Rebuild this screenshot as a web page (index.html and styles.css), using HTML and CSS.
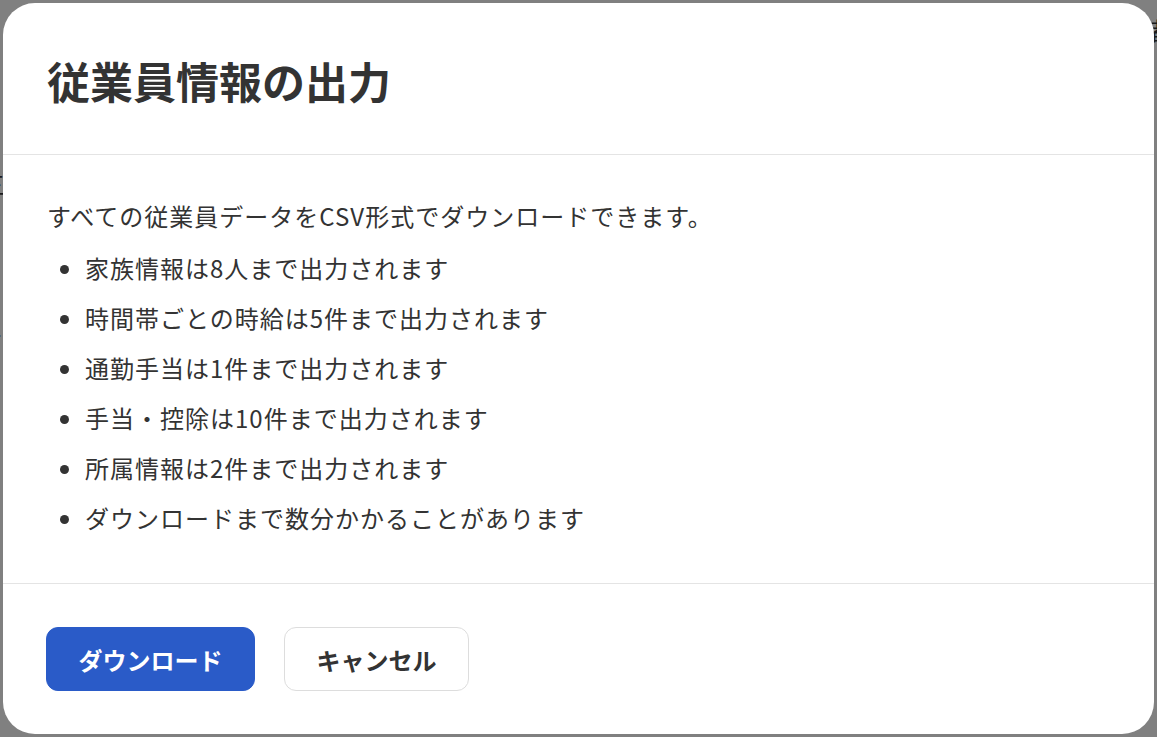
FILE: index.html
```html
<!doctype html>
<html lang="ja">
<head>
<meta charset="utf-8" />
<meta name="viewport" content="width=device-width" />
<title>従業員情報の出力</title>
<link rel="stylesheet" href="styles.css">
</head>
<body>
<!-- bits of the page that show behind the overlay -->
<div class="peek peek-right" aria-hidden="true">者</div>
<div class="peek peek-left1" aria-hidden="true">三</div>
<div class="peek peek-left2" aria-hidden="true">2</div>

<div class="modal">
	<div class="modal-header">
		<h1>従業員情報の出力</h1>
	</div>
	<div class="modal-body">
		<p>すべての従業員データをCSV形式でダウンロードできます。</p>
		<ul>
			<li>家族情報は8人まで出力されます</li>
			<li>時間帯ごとの時給は5件まで出力されます</li>
			<li>通勤手当は1件まで出力されます</li>
			<li>手当・控除は10件まで出力されます</li>
			<li>所属情報は2件まで出力されます</li>
			<li>ダウンロードまで数分かかることがあります</li>
		</ul>
	</div>
	<div class="modal-footer">
		<button class="btn btn-primary">ダウンロード</button>
		<button class="btn btn-secondary">キャンセル</button>
	</div>
</div>
</body>
</html>
```

FILE: styles.css
```css
* {
	box-sizing: border-box;
}
html, body {
	margin: 0;
	height: 100%;
}
body {
	background-color: #808080;
	font-family: "Noto Sans CJK JP", "Noto Sans", sans-serif;
	color: #333333;
	padding: 3px;
	overflow: hidden;
	position: relative;
}
.peek {
	position: absolute;
	color: #1a1a1a;
	font-size: 24px;
	line-height: 1;
}
.peek-right {
	right: -14px;
	top: 18px;
}
.peek-left1 {
	left: -19px;
	top: 172px;
}
.peek-left2 {
	left: -12px;
	top: 315px;
}
.modal {
	position: relative;
	background-color: #ffffff;
	border-radius: 32px;
	height: 731px;
	display: flex;
	flex-direction: column;
}
.modal-header {
	height: 152px;
	padding: 0 44px;
	display: flex;
	align-items: center;
	border-bottom: 1px solid #e4e4e4;
}
h1 {
	margin: 0;
	font-size: 43px;
	font-weight: bold;
	color: #333333;
	padding-top: 2px;
}
.modal-body {
	padding: 43px 44px 47px;
	font-size: 24px;
	line-height: 36px;
	letter-spacing: 1px;
	border-bottom: 1px solid #e4e4e4;
}
.modal-body p {
	margin: 0;
}
.modal-body ul {
	margin: 16px 0 0;
	padding-left: 38px;
	display: flex;
	flex-direction: column;
	gap: 14px;
}
.modal-body li {
	display: list-item;
}
.modal-footer {
	padding: 43px 43px;
	display: flex;
	gap: 29px;
}
.btn {
	height: 64px;
	padding: 0 31.5px;
	border-radius: 12px;
	font-family: "Noto Sans CJK JP", sans-serif;
	font-size: 24px;
	font-weight: bold;
	cursor: pointer;
}
.btn-primary {
	background-color: #2a5bc8;
	color: #ffffff;
	border: 1px solid #2a5bc8;
}
.btn-secondary {
	background-color: #ffffff;
	color: #333333;
	border: 1px solid #dddddd;
}
```
